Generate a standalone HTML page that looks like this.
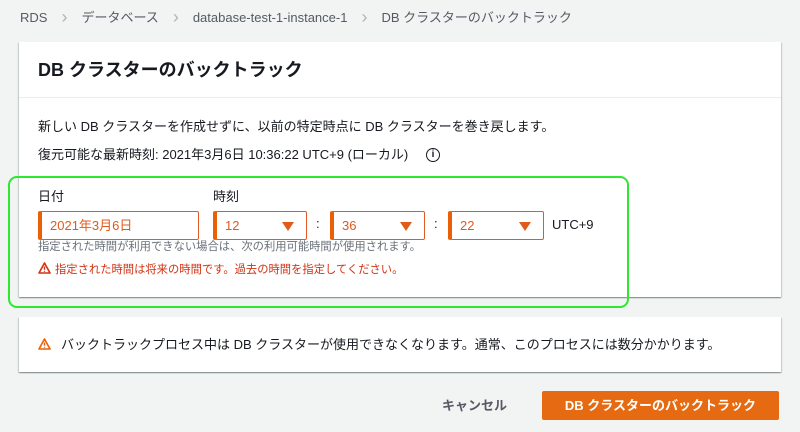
<!DOCTYPE html>
<html><head><meta charset="utf-8"><style>
body{margin:0;width:800px;height:432px;background:#f2f3f3;font-family:"Liberation Sans","Noto Sans CJK JP",sans-serif;color:#16191f;position:relative;overflow:hidden;font-size:13px}
.a{position:absolute;white-space:nowrap}
.bc{top:8px;left:20px;font-size:13px;color:#545b64;line-height:18px}
.bc span.s{color:#aab7b8;margin:0 14px;font-size:18px;vertical-align:-1px}
.card{position:absolute;background:#fff;box-shadow:0 1px 1px rgba(0,28,36,.3),1px 1px 1px rgba(0,28,36,.15),-1px 1px 1px rgba(0,28,36,.15)}
.inp{position:absolute;top:211px;height:29px;border:1px solid #e05a26;border-left:4px solid #eb5f07;border-radius:2px;box-sizing:border-box;color:#e05a1a;font-size:13px;line-height:27px;padding-left:8px;background:#fff}
.tri{position:absolute;right:12px;top:10px;width:0;height:0;border-left:6px solid transparent;border-right:6px solid transparent;border-top:9px solid #e05a1a}
</style></head><body>
<div class="a bc">RDS<span class="s">›</span>データベース<span class="s">›</span>database-test-1-instance-1<span class="s">›</span>DB クラスターのバックトラック</div>
<div class="card" style="left:19px;top:42px;width:762px;height:255px">
<div style="height:55px;border-bottom:1px solid #eaeded"></div>
</div>
<div class="a" style="left:38px;top:58px;font-size:18px;font-weight:bold;line-height:24px">DB クラスターのバックトラック</div>
<div class="a" style="left:38px;top:118px;line-height:18px">新しい DB クラスターを作成せずに、以前の特定時点に DB クラスターを巻き戻します。</div>
<div class="a" style="left:38px;top:146px;line-height:18px">復元可能な最新時刻: 2021年3月6日 10:36:22 UTC+9 (ローカル)</div>
<div class="a" style="left:426px;top:148px;width:12px;height:12px;border:1.5px solid #16191f;border-radius:50%;font-size:10px;font-weight:bold;text-align:center;line-height:12px">i</div>
<div style="position:absolute;left:8px;top:176px;width:617px;height:128px;border:2px solid #2ee82e;border-radius:9px"></div>
<div class="a" style="left:38px;top:188px;line-height:18px">日付</div>
<div class="a" style="left:213px;top:188px;line-height:18px">時刻</div>
<div class="inp" style="left:38px;width:161px">2021年3月6日</div>
<div class="inp" style="left:213px;width:94px">12<div class="tri"></div></div>
<div class="a" style="left:316px;top:216px">:</div>
<div class="inp" style="left:330px;width:95px">36<div class="tri"></div></div>
<div class="a" style="left:434px;top:216px">:</div>
<div class="inp" style="left:448px;width:96px">22<div class="tri"></div></div>
<div class="a" style="left:552px;top:217px">UTC+9</div>
<div class="a" style="left:38px;top:239px;font-size:11.3px;color:#687078;line-height:16px">指定された時間が利用できない場合は、次の利用可能時間が使用されます。</div>
<div class="a" style="left:38px;top:262px;font-size:11.3px;color:#d13212;line-height:16px"><svg width="13" height="12" viewBox="0 0 13 12" style="vertical-align:-1px;margin-right:4px"><path d="M6.5 1L12 11H1Z" fill="none" stroke="#d13212" stroke-width="1.6" stroke-linejoin="round"/><path d="M6.5 4.5v3.3M6.5 8.8v1" stroke="#d13212" stroke-width="1.4"/></svg>指定された時間は将来の時間です。過去の時間を指定してください。</div>
<div class="card" style="left:19px;top:317px;width:762px;height:55px"></div>
<div class="a" style="left:38px;top:336px;line-height:18px"><svg width="13" height="12" viewBox="0 0 13 12" style="vertical-align:-1px;margin-right:10px"><path d="M6.5 1L12 11H1Z" fill="none" stroke="#eb5f07" stroke-width="1.6" stroke-linejoin="round"/><path d="M6.5 4.5v3.3M6.5 8.8v1" stroke="#eb5f07" stroke-width="1.4"/></svg>バックトラックプロセス中は DB クラスターが使用できなくなります。通常、このプロセスには数分かかります。</div>
<div class="a" style="left:442px;top:397px;font-weight:bold;color:#545b64;line-height:18px">キャンセル</div>
<div style="position:absolute;left:542px;top:391px;width:237px;height:29px;background:#e66a12;border-radius:2px;color:#fff;font-weight:bold;text-align:center;line-height:29px">DB クラスターのバックトラック</div>
</body></html>
